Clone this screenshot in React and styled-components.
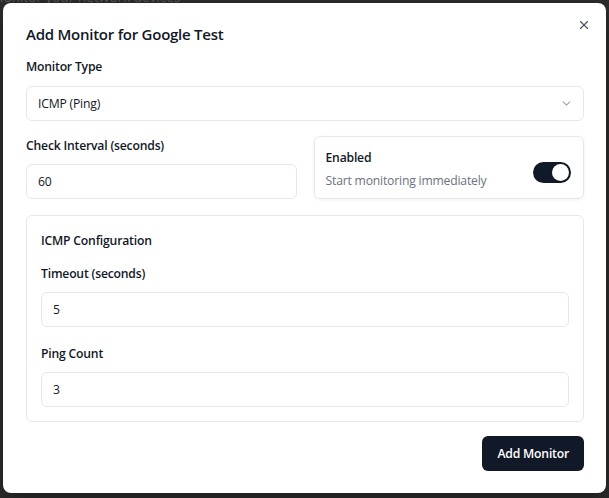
import React, { useState } from 'react';
import styled, { createGlobalStyle } from 'styled-components';

const GlobalStyle = createGlobalStyle`
  html, body {
    margin: 0;
    padding: 0;
    background: #2c2c2c;
    font-family: "Open Sans", "Noto Sans", sans-serif;
    color: #111827;
  }
  * { box-sizing: border-box; }
`;

const Backdrop = styled.div`
  position: relative;
  width: 609px;
  height: 498px;
  padding: 3px 3px 5px 3px;
  overflow: hidden;
`;

const BehindText = styled.div`
  position: absolute;
  top: -13px;
  left: -9px;
  font-size: 14px;
  letter-spacing: -0.2px;
  color: #565656;
  white-space: nowrap;
`;

const Dialog = styled.div`
  position: relative;
  width: 603px;
  height: 490px;
  background: #fff;
  border-radius: 8px;
  padding: 19px 22px 22px 23px;
  display: flex;
  flex-direction: column;
  box-shadow: 0 10px 30px rgba(0, 0, 0, 0.35);
`;

const Title = styled.h2`
  margin: 0 0 11px;
  font-size: 15px;
  letter-spacing: -0.25px;
  line-height: 24px;
  font-weight: 600;
`;

const CloseButton = styled.button`
  position: absolute;
  top: 15px;
  right: 15px;
  width: 14px;
  height: 14px;
  padding: 0;
  border: none;
  background: none;
  color: #4b5563;
  display: flex;
  align-items: center;
  justify-content: center;
`;

const Field = styled.div`
  display: flex;
  flex-direction: column;
  gap: ${({ $gap }) => $gap || 8}px;
`;

const Label = styled.label`
  font-size: 12.2px;
  letter-spacing: -0.2px;
  line-height: 20px;
  font-weight: 600;
  color: #111827;
`;

const Input = styled.input`
  height: 35px;
  width: 100%;
  border: 1px solid #e5e7eb;
  border-radius: 6px;
  padding: 0 11px;
  font: inherit;
  font-size: 12.2px;
  letter-spacing: -0.2px;
  color: #111827;
  background: #fff;
  outline: none;
`;

const SelectBox = styled.div`
  height: 35px;
  border: 1px solid #e5e7eb;
  border-radius: 6px;
  padding: 0 10px 0 11px;
  display: flex;
  align-items: center;
  justify-content: space-between;
  font-size: 12.2px;
  letter-spacing: -0.2px;
  color: #111827;
`;

const Row = styled.div`
  margin-top: 15px;
  display: grid;
  grid-template-columns: 1fr 1fr;
  gap: 17px;
`;

const SwitchCard = styled.div`
  height: 63px;
  border: 1px solid #e5e7eb;
  border-radius: 6px;
  box-shadow: 0 1px 3px rgba(0, 0, 0, 0.06);
  padding: 12px 12px 8px 11px;
  display: flex;
  align-items: center;
  justify-content: space-between;
`;

const SwitchText = styled.div`
  display: flex;
  flex-direction: column;
  gap: 3px;
`;

const Hint = styled.span`
  font-size: 12.2px;
  letter-spacing: -0.2px;
  line-height: 20px;
  color: #6b7280;
`;

const Toggle = styled.button`
  width: 38px;
  height: 21px;
  border: none;
  border-radius: 999px;
  padding: 2px;
  margin-top: 6px;
  background: ${({ $on }) => ($on ? '#111827' : '#e5e7eb')};
  display: flex;
  justify-content: ${({ $on }) => ($on ? 'flex-end' : 'flex-start')};
  cursor: pointer;
`;

const Knob = styled.span`
  width: 17px;
  height: 17px;
  border-radius: 50%;
  background: #fff;
  box-shadow: 0 1px 3px rgba(0, 0, 0, 0.2);
`;

const ConfigCard = styled.div`
  margin-top: 16px;
  border: 1px solid #e5e7eb;
  border-radius: 6px;
  padding: 15px 14px 14px 14px;
  display: flex;
  flex-direction: column;
`;

const ConfigTitle = styled.h3`
  margin: 0 0 13px;
  font-size: 12.2px;
  letter-spacing: -0.2px;
  line-height: 20px;
  font-weight: 600;
`;

const Footer = styled.div`
  margin-top: auto;
  display: flex;
  justify-content: flex-end;
`;

const PrimaryButton = styled.button`
  height: 35px;
  padding: 0 15px;
  border: none;
  border-radius: 6px;
  background: #111827;
  color: #fff;
  font: inherit;
  font-size: 12.2px;
  letter-spacing: -0.2px;
  font-weight: 600;
`;

const Chevron = () => (
  <svg width="13" height="13" viewBox="0 0 24 24" fill="none" stroke="#9ca3af" strokeWidth="2" strokeLinecap="round" strokeLinejoin="round">
    <path d="m6 9 6 6 6-6" />
  </svg>
);

const CloseIcon = () => (
  <svg width="14" height="14" viewBox="0 0 24 24" fill="none" stroke="currentColor" strokeWidth="2" strokeLinecap="round" strokeLinejoin="round">
    <path d="M18 6 6 18" />
    <path d="m6 6 12 12" />
  </svg>
);

const App = () => {
  const [enabled, setEnabled] = useState(true);
  const [interval, setInterval] = useState('60');
  const [timeout, setTimeout] = useState('5');
  const [count, setCount] = useState('3');

  return (
    <Backdrop>
      <GlobalStyle />
      <BehindText>Monitor your network devices</BehindText>
      <Dialog>
        <CloseButton aria-label="Close"><CloseIcon /></CloseButton>
        <Title>Add Monitor for Google Test</Title>

        <Field $gap={9}>
          <Label>Monitor Type</Label>
          <SelectBox>
            <span>ICMP (Ping)</span>
            <Chevron />
          </SelectBox>
        </Field>

        <Row>
          <Field>
            <Label htmlFor="interval">Check Interval (seconds)</Label>
            <Input id="interval" value={interval} onChange={e => setInterval(e.target.value)} />
          </Field>
          <SwitchCard>
            <SwitchText>
              <Label>Enabled</Label>
              <Hint>Start monitoring immediately</Hint>
            </SwitchText>
            <Toggle $on={enabled} onClick={() => setEnabled(!enabled)}>
              <Knob />
            </Toggle>
          </SwitchCard>
        </Row>

        <ConfigCard>
          <ConfigTitle>ICMP Configuration</ConfigTitle>
          <Field>
            <Label htmlFor="timeout">Timeout (seconds)</Label>
            <Input id="timeout" value={timeout} onChange={e => setTimeout(e.target.value)} />
          </Field>
          <Field style={{ marginTop: 17 }}>
            <Label htmlFor="count">Ping Count</Label>
            <Input id="count" value={count} onChange={e => setCount(e.target.value)} />
          </Field>
        </ConfigCard>

        <Footer>
          <PrimaryButton>Add Monitor</PrimaryButton>
        </Footer>
      </Dialog>
    </Backdrop>
  );
};

export default App;
